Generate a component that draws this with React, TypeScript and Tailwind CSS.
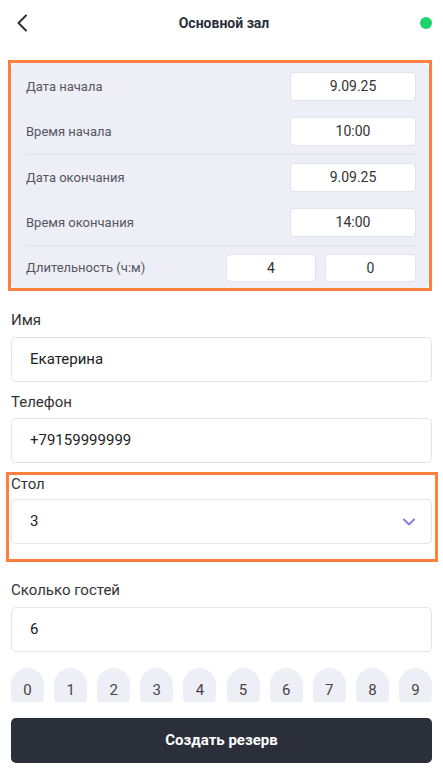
import React from "react";

const rows1 = [
  { label: "Дата начала", value: "9.09.25" },
  { label: "Время начала", value: "10:00" },
];
const rows2 = [
  { label: "Дата окончания", value: "9.09.25" },
  { label: "Время окончания", value: "14:00" },
];
const digits = ["0", "1", "2", "3", "4", "5", "6", "7", "8", "9"];

function TimeRow({ label, value }: { label: string; value: string }) {
  return (
    <div className="flex h-[29px] items-center justify-between">
      <span className="text-[13px] text-[#55565f]">{label}</span>
      <div className="flex h-[29px] w-[126px] items-center justify-center rounded-[4px] border border-[#e3e3ef] bg-white text-[14px] text-[#333]">
        {value}
      </div>
    </div>
  );
}

function Field({ value, chevron }: { value: string; chevron?: boolean }) {
  return (
    <div className="flex h-[45px] items-center justify-between rounded-[5px] border border-[#e4e3f2] bg-white pl-[18px] pr-[16px] text-[15px] text-[#222]">
      <span>{value}</span>
      {chevron && (
        <svg width="12" height="8" viewBox="0 0 12 8" fill="none">
          <path d="M1 1.5L6 6.5L11 1.5" stroke="#8a7de6" strokeWidth="2" strokeLinecap="round" strokeLinejoin="round" />
        </svg>
      )}
    </div>
  );
}

export default function App() {
  return (
    <div
      className="min-h-[770px] w-[443px] bg-white text-[#2b2f3a]"
      style={{ fontFamily: "Roboto, 'Liberation Sans', sans-serif" }}
    >
      <div className="flex h-[46px] items-center justify-between pl-[16px] pr-[11px]">
        <svg width="12" height="18" viewBox="0 0 12 18" fill="none">
          <path d="M10 1.5L2.5 9L10 16.5" stroke="#2b2f3a" strokeWidth="2" strokeLinecap="round" strokeLinejoin="round" />
        </svg>
        <span className="text-[14px] font-bold">Основной зал</span>
        <div className="h-[12px] w-[12px] rounded-full bg-[#1fd36b]" />
      </div>

      <div className="px-[11px] pt-[14px]">
        <div className="-ml-[3px] border-[3px] border-[#ff7f3f]">
          <div className="rounded-md bg-[#eeeef7] pb-[6px] pl-[15px] pr-[13px] pt-[9px]">
            <div className="flex flex-col gap-[16px] border-b border-[#dfdfeb] pb-[8px]">
              {rows1.map((r) => (
                <TimeRow key={r.label} {...r} />
              ))}
            </div>
            <div className="flex flex-col gap-[16px] border-b border-[#dfdfeb] py-[8px]">
              {rows2.map((r) => (
                <TimeRow key={r.label} {...r} />
              ))}
            </div>
            <div className="flex h-[28px] items-center pt-0 mt-[8px]">
              <span className="flex-1 text-[13px] text-[#55565f]">Длительность (ч:м)</span>
              <div className="flex gap-[9px]">
                <div className="flex h-[28px] w-[90px] items-center justify-center rounded-[4px] border border-[#e3e3ef] bg-white text-[14px] text-[#333]">
                  4
                </div>
                <div className="flex h-[28px] w-[91px] items-center justify-center rounded-[4px] border border-[#e3e3ef] bg-white text-[14px] text-[#333]">
                  0
                </div>
              </div>
            </div>
          </div>
        </div>

        <div className="mt-[20px] h-[18px] text-[15px] leading-[18px] text-[#333]">Имя</div>
        <div className="mt-[8px]">
          <Field value="Екатерина" />
        </div>

        <div className="mt-[11px] h-[18px] text-[15px] leading-[18px] text-[#333]">Телефон</div>
        <div className="mt-[7px]">
          <Field value="+79159999999" />
        </div>

        <div className="-ml-[5px] -mr-[6px] mt-[9px] border-[3px] border-[#ff7f3f] pb-[15px] pl-[2px] pr-[3px]">
          <div className="h-[18px] text-[15px] leading-[18px] text-[#333]">Стол</div>
          <div className="mt-[6px]">
            <Field value="3" chevron />
          </div>
        </div>

        <div className="mt-[19px] h-[18px] text-[15px] leading-[18px] text-[#333]">Сколько гостей</div>
        <div className="mt-[8px]">
          <Field value="6" />
        </div>

        <div className="mt-[16px] flex h-[34px] justify-between overflow-hidden">
          {digits.map((d) => (
            <div
              key={d}
              className="flex h-[44px] w-[33px] shrink-0 items-center justify-center rounded-full bg-[#eeeef6] text-[15px] text-[#444]"
            >
              {d}
            </div>
          ))}
        </div>

        <button className="mt-[16px] flex h-[45px] w-full items-center justify-center rounded-[5px] bg-[#2b2f3a] text-[15px] font-bold text-white">
          Создать резерв
        </button>
      </div>
    </div>
  );
}
